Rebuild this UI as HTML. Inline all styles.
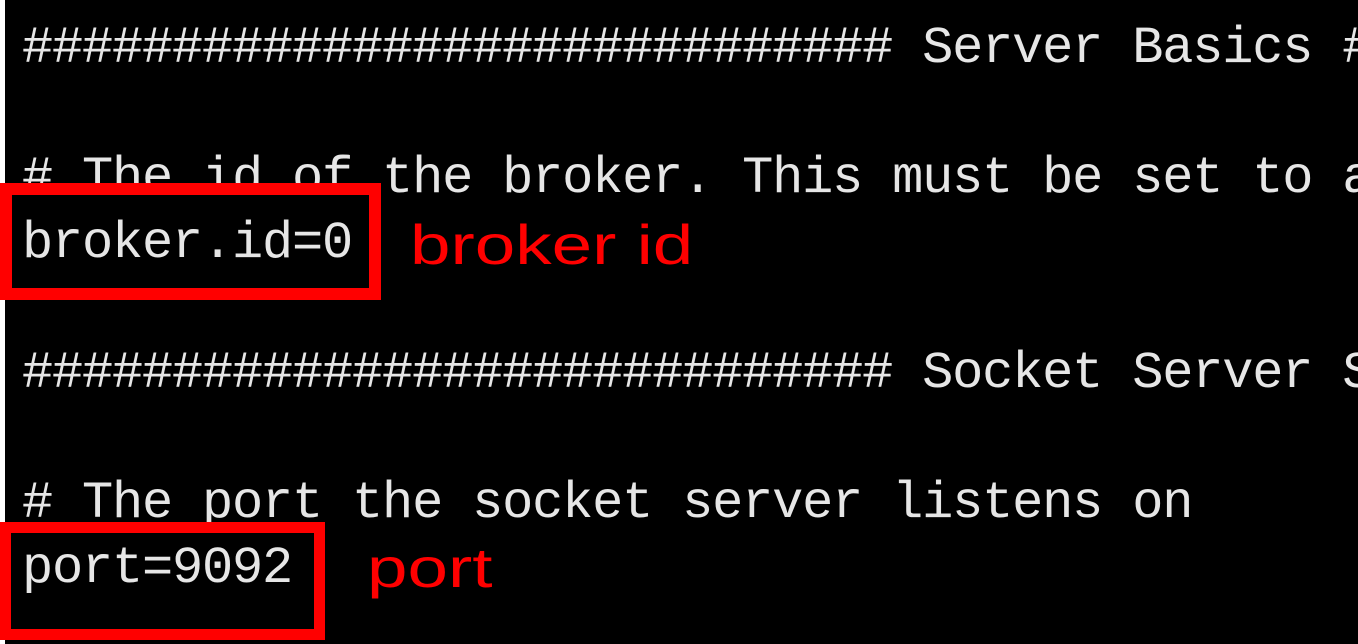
<!DOCTYPE html>
<html><head><meta charset="utf-8"><style>
html,body{margin:0;padding:0;background:#000;width:1358px;height:644px;overflow:hidden;position:relative}
.strip{position:absolute;left:0;top:0;width:5px;height:644px;background:#fff}
.l{position:absolute;left:22px;font-family:"Liberation Mono",monospace;font-size:52px;letter-spacing:-1.2px;line-height:65px;color:#e6e6e6;white-space:pre}
.box{position:absolute;border:12px solid #ff0000;box-sizing:border-box}
.r{position:absolute;font-family:"Comic Sans MS","Liberation Sans",sans-serif;color:#ff0000;font-size:56px;line-height:65px;white-space:pre;transform:scaleX(1.3);transform-origin:0 0}
</style></head><body>
<div class="strip"></div>
<div class="l" style="top:16px">############################# Server Basics #</div>
<div class="l" style="top:146px"># The id of the broker. This must be set to a</div>
<div class="l" style="top:211px">broker.id=0</div>
<div class="l" style="top:341px">############################# Socket Server S</div>
<div class="l" style="top:471px"># The port the socket server listens on</div>
<div class="l" style="top:536px">port=9092</div>
<div class="box" style="left:0;top:183px;width:381px;height:117px"></div>
<div class="box" style="left:0;top:522px;width:325px;height:118px;border-width:11px"></div>
<div class="r" style="left:410px;top:212px">broker id</div>
<div class="r" style="left:367px;top:535px">port</div>
</body></html>
